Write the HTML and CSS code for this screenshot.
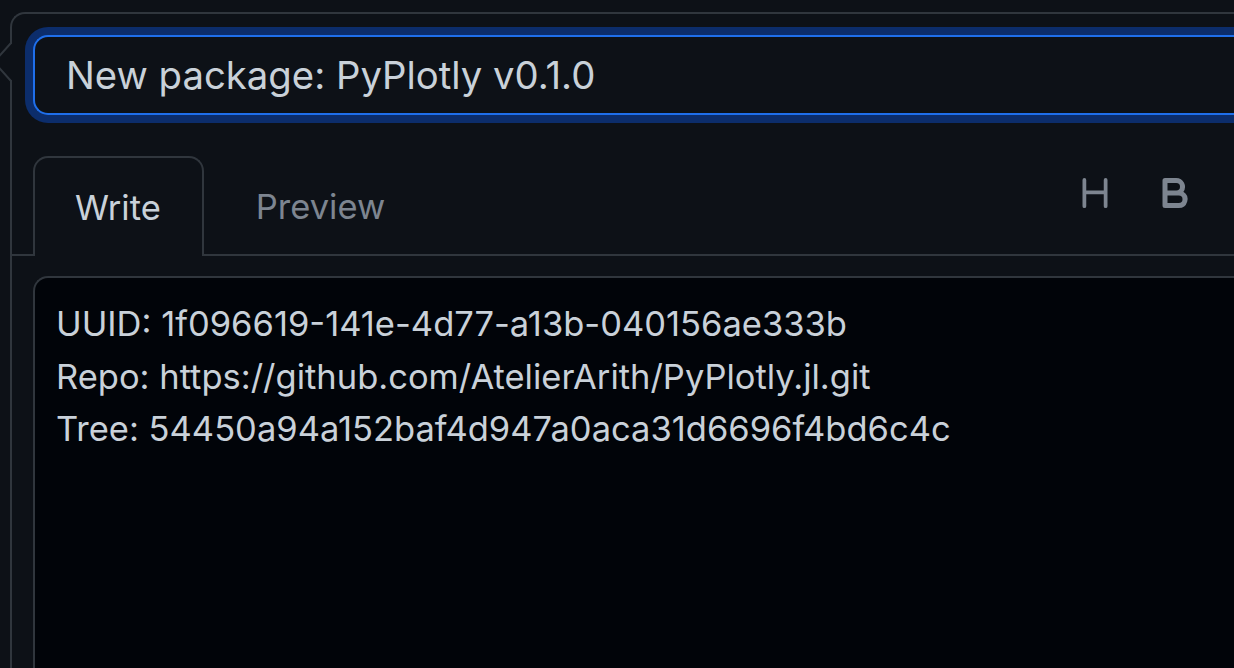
FILE: index.html
```html
<!DOCTYPE html>
<html lang="en">
<head>
  <meta charset="UTF-8" />
  <meta name="viewport" content="width=device-width, initial-scale=1.0" />
  <title>New package: PyPlotly v0.1.0</title>
  <link rel="stylesheet" href="styles.css">
</head>
<body>
  <div class="comment-box">
    <svg class="caret" width="22" height="40" viewBox="0 0 22 40">
      <path d="M19 2 L2 20 L19 38 L22 38 L22 2 Z" fill="#0d1117" />
      <path d="M19 1 L2 20 L19 39" fill="none" stroke="#30363d" stroke-width="2" />
    </svg>

    <div class="title-row">
      <input class="title-input" type="text" value="New package: PyPlotly v0.1.0" />
    </div>

    <div class="tabs">
      <div class="tab active">Write</div>
      <div class="tab">Preview</div>
      <div class="toolbar">
        <span class="tool" title="Heading">
          <svg viewBox="0 0 16 16" width="40" height="40"><path d="M3.75 2a.75.75 0 0 1 .75.75V7h7V2.75a.75.75 0 0 1 1.5 0v10.5a.75.75 0 0 1-1.5 0V8.5h-7v4.75a.75.75 0 0 1-1.5 0V2.75A.75.75 0 0 1 3.75 2Z"/></svg>
        </span>
        <span class="tool" title="Bold">
          <svg viewBox="0 0 16 16" width="40" height="40"><path d="M4 2h4.5a3.501 3.501 0 0 1 2.852 5.53A3.499 3.499 0 0 1 9.5 14H4a1 1 0 0 1-1-1V3a1 1 0 0 1 1-1Zm1 7v3h4.5a1.5 1.5 0 0 0 0-3Zm3.5-2a1.5 1.5 0 0 0 0-3H5v3Z"/></svg>
        </span>
      </div>
    </div>

    <div class="editor">
      <textarea class="body-input">UUID: 1f096619-141e-4d77-a13b-040156ae333b
Repo: https://github.com/AtelierArith/PyPlotly.jl.git
Tree: 54450a94a152baf4d947a0aca31d6696f4bd6c4c</textarea>
    </div>
  </div>
</body>
</html>
```

FILE: styles.css
```css
html, body {
  margin: 0;
  height: 100%;
  overflow: hidden;
}

body {
  background-color: #0d1117;
  color: #c9d1d9;
  font-family: Inter, "Noto Sans", sans-serif;
}

.comment-box {
  position: relative;
  box-sizing: border-box;
  display: flex;
  flex-direction: column;
  height: calc(100% - 12px);
  margin: 12px 0 0 10px;
  border: 2px solid #30363d;
  border-right: none;
  border-bottom: none;
  border-radius: 15px 0 0 0;
}

.caret {
  position: absolute;
  left: -20px;
  top: 28px;
}

.title-row {
  padding: 21px 0 0 21px;
}

.title-input {
  display: block;
  box-sizing: border-box;
  width: 100%;
  height: 80px;
  padding: 0 0 0 31px;
  border: 2px solid #1f6feb;
  border-right: none;
  border-radius: 15px 0 0 15px;
  box-shadow: 0 0 0 8px #0c2d6b;
  background-color: #0d1117;
  color: #c9d1d9;
  font-family: inherit;
  font-size: 38.3px;
  outline: none;
}

.tabs {
  display: flex;
  align-items: flex-end;
  margin-top: 41px;
  padding-left: 21px;
  border-bottom: 2px solid #30363d;
}

.tab {
  box-sizing: border-box;
  height: 98px;
  padding: 0 41px;
  display: flex;
  align-items: center;
  font-size: 34.5px;
  color: #7d8590;
  border: 2px solid transparent;
  border-bottom: none;
}

.tab.active {
  color: #c9d1d9;
  background-color: #0d1117;
  border-color: #30363d;
  border-radius: 15px 15px 0 0;
  margin-bottom: -2px;
  height: 100px;
  padding: 0 41px 0 40px;
}

.tab + .tab {
  padding-left: 50px;
}

.toolbar {
  display: flex;
  gap: 40px;
  align-self: flex-start;
  margin-left: auto;
  margin-top: 17px;
  padding-right: 39px;
}

.tool svg {
  display: block;
  fill: #7d8590;
}

.editor {
  flex: 1;
  min-height: 0;
  padding: 20px 0 0 21px;
}

.body-input {
  display: block;
  box-sizing: border-box;
  width: 100%;
  height: 100%;
  padding: 20px 21px;
  border: 2px solid #30363d;
  border-right: none;
  border-bottom: none;
  border-radius: 15px 0 0 0;
  background-color: #010409;
  color: #c9d1d9;
  font-family: inherit;
  font-size: 34.5px;
  line-height: 52.5px;
  resize: none;
  outline: none;
  overflow: hidden;
}
```
